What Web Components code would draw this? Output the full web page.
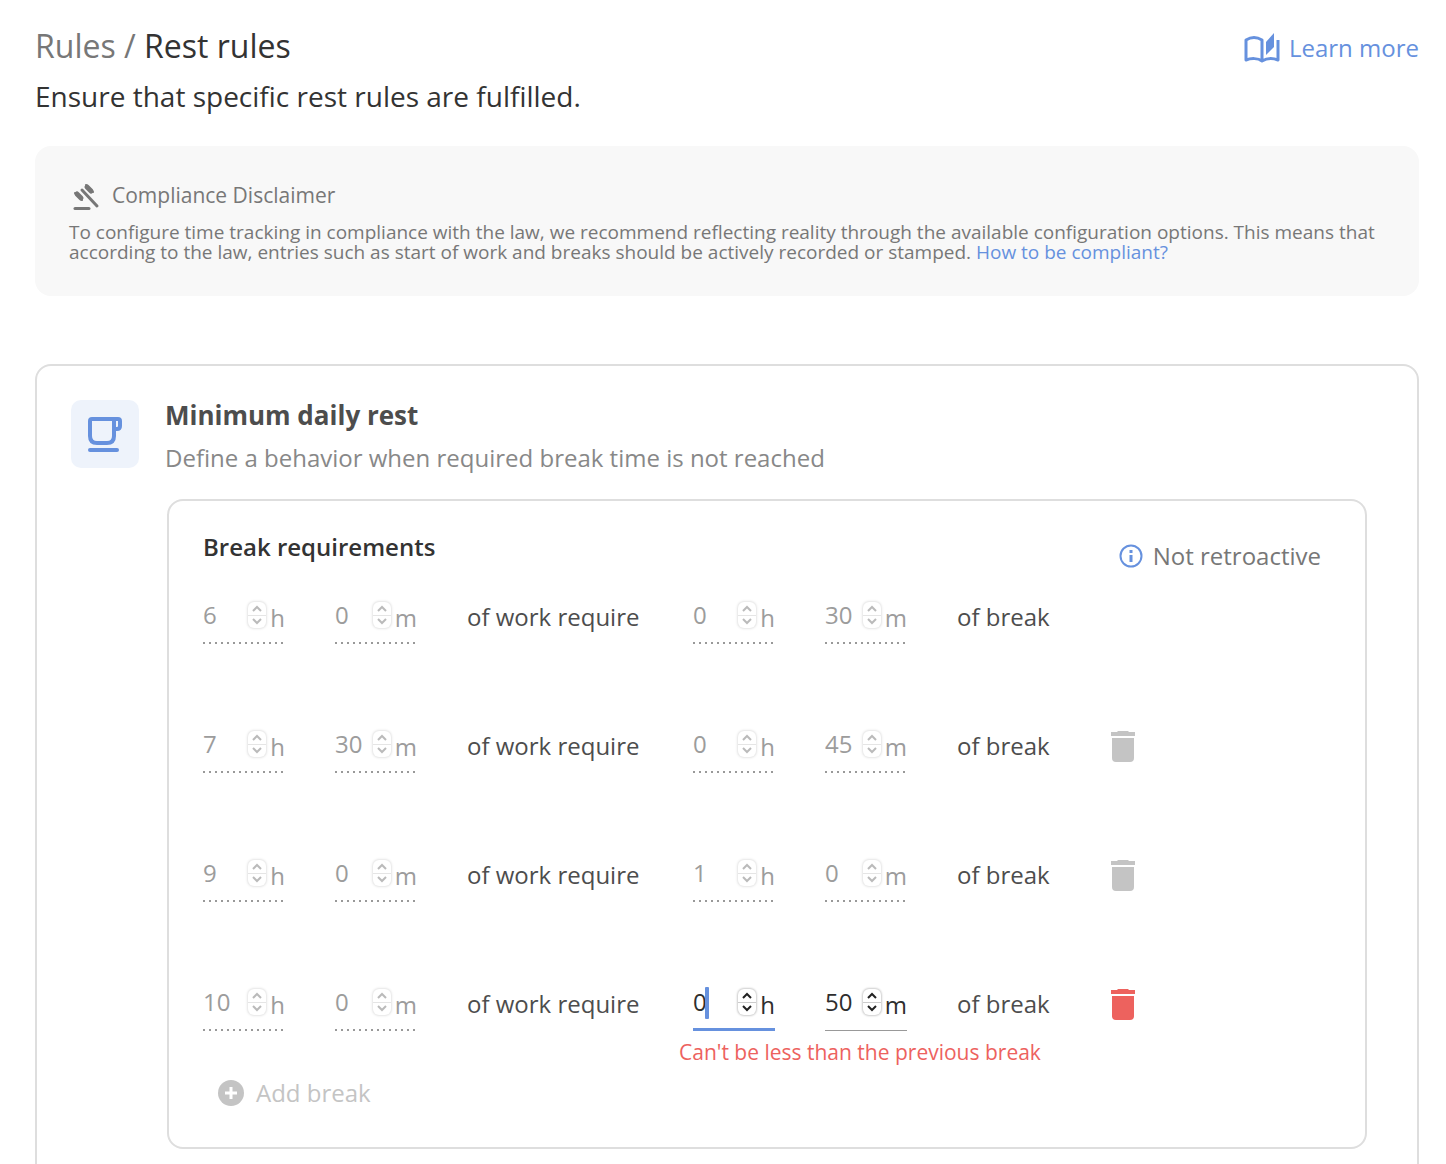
<!DOCTYPE html>
<html lang="en">
<head>
<meta charset="utf-8">
<title>Rest rules</title>
<style>
	body {
	  margin: 0;
	  background: #fff;
	  color: #333;
	  font: 24px/32px "Open Sans", "Noto Sans", sans-serif;
	  --blue: #6691de;
	  --red: #ed625e;
	  --grey: #777;
	  --muted: #9c9c9c;
	  --line: #dedede;
	}
</style>
</head>
<body>
<rest-rules-page>
	<page-header slot="header">
		<a slot="parent" href="#rules">Rules</a>
		<span slot="title">Rest rules</span>
		<span slot="subtitle">Ensure that specific rest rules are fulfilled.</span>
		<span slot="help">Learn more</span>
	</page-header>
	<compliance-note>
		<span slot="title">Compliance Disclaimer</span>
		To configure time tracking in compliance with the law, we recommend reflecting reality through the available configuration options. This means that according to the law, entries such as start of work and breaks should be actively recorded or stamped.
		<a slot="link" href="#compliance">How to be compliant?</a>
	</compliance-note>
	<setting-card>
		<span slot="title">Minimum daily rest</span>
		<span slot="description">Define a behavior when required break time is not reached</span>
		<break-requirements>
			<span slot="title">Break requirements</span>
			<span slot="note">Not retroactive</span>
			<break-row work="6:0" rest="0:30" fixed></break-row>
			<break-row work="7:30" rest="0:45"></break-row>
			<break-row work="9:0" rest="1:0"></break-row>
			<break-row work="10:0" rest="0:50" editing>Can't be less than the previous break</break-row>
		</break-requirements>
	</setting-card>
</rest-rules-page>

<script>
// attaches an open shadow root filled with the given markup
function render(host, html) {
  const template = document.createElement("template");
  template.innerHTML = html;
  host.attachShadow({ mode: "open" }).appendChild(template.content.cloneNode(true));
}

class RestRulesPage extends HTMLElement {
  constructor() {
    super();
    render(this, `
	<style>
		:host {
		  display: block;
		  padding: 28px 27px 0 35px;
		}
		main {
		  display: flex;
		  flex-direction: column;
		  gap: 68px;
		  margin-top: 32px;
		}
	</style>
	<slot name="header"></slot>
	<main><slot></slot></main>
    `);
  }
}

class PageHeader extends HTMLElement {
  constructor() {
    super();
    render(this, `
	<style>
		:host {
		  display: block;
		}
		.top {
		  display: flex;
		  justify-content: space-between;
		  align-items: center;
		}
		h1 {
		  margin: 0;
		  font-size: 32px;
		  line-height: 36px;
		  font-weight: 400;
		}
		.parent {
		  color: var(--grey);
		}
		::slotted(a) {
		  color: inherit;
		  text-decoration: none;
		}
		.help {
		  display: flex;
		  align-items: center;
		  gap: 8px;
		  padding-top: 4px;
		  color: var(--blue);
		  text-decoration: none;
		}
		p {
		  margin: 14px 0 0;
		  font-size: 28px;
		  line-height: 36px;
		}
	</style>
	<div class="top">
		<h1><span class="parent"><slot name="parent"></slot> /</span> <slot name="title"></slot></h1>
		<a class="help" href="#help">
			<svg width="38" height="32" viewBox="0 0 38 32" fill="none" stroke="currentColor" stroke-width="3" aria-hidden="true">
				<path d="M19 29C15 26 8 26 3 28V8C8 5 14 5 19 8V29C24 26 30 26 35 28V8" stroke-linejoin="round"/>
				<path d="M23 10L31 1V15L23 23Z" fill="currentColor" stroke="none"/>
			</svg>
			<slot name="help"></slot>
		</a>
	</div>
	<p><slot name="subtitle"></slot></p>
    `);
  }
}

class ComplianceNote extends HTMLElement {
  constructor() {
    super();
    render(this, `
	<style>
		:host {
		  display: block;
		  padding: 34px;
		  border-radius: 16px;
		  background: #f8f8f8;
		  color: var(--grey);
		}
		h2 {
		  display: flex;
		  align-items: center;
		  gap: 9px;
		  margin: 0 0 12px;
		  font-size: 21px;
		  line-height: 30px;
		  font-weight: 400;
		}
		p {
		  margin: 0;
		  font-size: 19px;
		  line-height: 20px;
		  font-weight: 500;
		}
		::slotted(a) {
		  display: inline-block;
		  color: var(--blue);
		  text-decoration: none;
		}
	</style>
	<h2>
		<svg width="34" height="30" viewBox="0 0 34 30" stroke="currentColor" stroke-linecap="round" fill="none" aria-hidden="true">
			<path d="M6 28.500H20" stroke-width="3"/>
			<path d="M13 10L28 26" stroke-width="3"/>
			<path d="M8 14L12 18M18 7L22 11" stroke-width="5"/>
			<path d="M6 13L13 20M17 5L24 12" stroke-width="2"/>
		</svg>
		<slot name="title"></slot>
	</h2>
	<p><slot></slot> <slot name="link"></slot></p>
    `);
  }
}

class SettingCard extends HTMLElement {
  constructor() {
    super();
    render(this, `
	<style>
		:host {
		  display: block;
		  padding: 34px 50px 50px 34px;
		  border: 2px solid var(--line);
		  border-radius: 16px;
		  font-weight: 500;
		}
		header {
		  display: flex;
		  gap: 26px;
		}
		.tile {
		  display: grid;
		  place-items: center;
		  width: 68px;
		  height: 68px;
		  border-radius: 10px;
		  background: #eef3fb;
		  color: var(--blue);
		}
		h2 {
		  margin: 0;
		  font-size: 26px;
		  line-height: 30px;
		  font-weight: 700;
		  color: #4d4d4d;
		}
		p {
		  margin: 12px 0 0;
		  color: #888;
		}
		.body {
		  margin: 25px 0 0 96px;
		}
	</style>
	<header>
		<div class="tile">
			<svg width="38" height="38" viewBox="0 0 38 38" fill="none" stroke="currentColor" stroke-width="4" stroke-linejoin="round" stroke-linecap="round" aria-hidden="true">
				<path d="M6 4H32Q34 4 34 6V11Q34 14 31 14H28M28 4V21Q28 28 21 28H11Q4 28 4 21V6Q4 4 6 4"/>
				<path d="M4 35H31"/>
			</svg>
		</div>
		<div>
			<h2><slot name="title"></slot></h2>
			<p><slot name="description"></slot></p>
		</div>
	</header>
	<div class="body"><slot></slot></div>
    `);
  }
}

class BreakRequirements extends HTMLElement {
  constructor() {
    super();
    render(this, `
	<style>
		:host {
		  display: block;
		  padding: 30px 34px 38px;
		  border: 2px solid var(--line);
		  border-radius: 16px;
		}
		header {
		  display: flex;
		  justify-content: space-between;
		  height: 41px;
		  margin: 0 10px 21px 0;
		}
		h3 {
		  margin: 0;
		  font-size: 24px;
		  font-weight: 600;
		}
		.note {
		  display: flex;
		  align-items: center;
		  align-self: flex-end;
		  gap: 10px;
		  color: var(--grey);
		}
		.note svg {
		  color: var(--blue);
		}
		.rows {
		  display: grid;
		  gap: 78px;
		}
		.add {
		  display: flex;
		  align-items: center;
		  gap: 12px;
		  margin: 12px 0 0 15px;
		  padding: 0;
		  border: 0;
		  background: none;
		  font: inherit;
		  color: #c4c4c4;
		}
	</style>
	<header>
		<h3><slot name="title"></slot></h3>
		<div class="note">
			<svg width="24" height="24" viewBox="0 0 24 24" fill="none" stroke="currentColor" stroke-width="2" aria-hidden="true">
				<circle cx="12" cy="12" r="10.500"/>
				<path d="M12 11V18M12 6V9" stroke-width="3"/>
			</svg>
			<slot name="note"></slot>
		</div>
	</header>
	<div class="rows"><slot></slot></div>
	<button class="add" type="button" disabled>
		<svg width="26" height="26" viewBox="0 0 26 26" aria-hidden="true">
			<circle cx="13" cy="13" r="13" fill="currentColor"/>
			<path d="M13 7V19M7 13H19" stroke="#fff" stroke-width="3"/>
		</svg>
		Add break
	</button>
    `);
  }
}

// attributes: work="h:m", rest="h:m", fixed (no delete button), editing
class BreakRow extends HTMLElement {
  constructor() {
    super();
    const [workH, workM] = this.getAttribute("work").split(":");
    const [restH, restM] = this.getAttribute("rest").split(":");
    const editing = this.hasAttribute("editing");
    render(this, `
	<style>
		:host {
		  display: block;
		  color: #4d4d4d;
		}
		.row {
		  display: grid;
		  grid-template-columns: 82px 82px 176px 82px 82px 94px 44px;
		  column-gap: 50px;
		  height: 51px;
		}
		.text {
		  padding-top: 8px;
		  white-space: nowrap;
		}
		button {
		  display: grid;
		  place-items: center;
		  height: 44px;
		  margin-top: 2px;
		  padding: 0;
		  border: 0;
		  background: none;
		  color: var(--red);
		}
		button:disabled {
		  color: #c4c4c4;
		}
		.error {
		  display: block;
		  margin: 8px 0 0 476px;
		  font-size: 21px;
		  line-height: 26px;
		  color: var(--red);
		}
	</style>
	<div class="row">
		<time-field value="${workH}" unit="h" disabled></time-field>
		<time-field value="${workM}" unit="m" disabled></time-field>
		<span class="text">of work require</span>
		<time-field value="${restH}" unit="h" ${editing ? "active" : "disabled"}></time-field>
		<time-field value="${restM}" unit="m" ${editing ? "" : "disabled"}></time-field>
		<span class="text">of break</span>
		${this.hasAttribute("fixed") ? "" : `
		<button type="button" aria-label="Delete" ${editing ? "" : "disabled"}>
			<svg width="26" height="32" viewBox="0 0 26 32" fill="currentColor" aria-hidden="true">
				<path d="M1 2H7L8 1H18L19 2H25V6H1ZM2 8H24V28Q24 32 20 32H6Q2 32 2 28Z"/>
			</svg>
		</button>`}
	</div>
	${editing ? `<span class="error" role="alert"><slot></slot></span>` : ""}
    `);
  }
}

class TimeField extends HTMLElement {
  constructor() {
    super();
    const disabled = this.hasAttribute("disabled") ? "disabled" : "";
    render(this, `
	<style>
		:host {
		  display: flex;
		  position: relative;
		  height: 51px;
		  box-sizing: border-box;
		  border-bottom: 1px solid #999;
		  color: #2e2e2e;
		  font-weight: 400;
		}
		:host([disabled]) {
		  color: var(--muted);
		  border: 0;
		  background: repeating-linear-gradient(90deg, #999 0 2px, transparent 2px 6px) left bottom / 100% 2px no-repeat;
		}
		:host([active]) {
		  border-bottom: 3px solid var(--blue);
		}
		input {
		  flex: 1;
		  min-width: 0;
		  width: 0;
		  height: 32px;
		  margin: 6px 0 0;
		  padding: 0;
		  border: 0;
		  outline: 0;
		  background: none;
		  font: inherit;
		  color: inherit;
		  appearance: textfield;
		}
		input::-webkit-inner-spin-button {
		  display: none;
		}
		.stepper {
		  display: grid;
		  width: 18px;
		  height: 26px;
		  margin: 9px 4px 0 0;
		  border-radius: 6px;
		  background: linear-gradient(#ccc, #ccc) center / 100% 1px no-repeat #fff;
		  box-shadow: 0 0 2px 1px rgba(0, 0, 0, .2);
		}
		:host([disabled]) .stepper {
		  opacity: .5;
		}
		.stepper button {
		  display: grid;
		  place-items: center;
		  height: 13px;
		  padding: 0;
		  border: 0;
		  background: none;
		  color: #222;
		}
		:host([disabled]) .stepper button {
		  color: #777;
		}
		label {
		  padding-top: 9px;
		}
		.caret {
		  position: absolute;
		  left: 12px;
		  top: 7px;
		  width: 4px;
		  height: 32px;
		  border-radius: 1px;
		  background: var(--blue);
		}
	</style>
	<input id="value" type="number" min="0" value="${this.getAttribute("value")}" ${disabled}>
	<div class="stepper">
		<button type="button" class="up" aria-label="Increase" tabindex="-1" ${disabled}>
			<svg width="12" height="7" viewBox="0 0 12 7" fill="none" stroke="currentColor" stroke-width="2"><path d="M2 6L6 2L10 6"/></svg>
		</button>
		<button type="button" class="down" aria-label="Decrease" tabindex="-1" ${disabled}>
			<svg width="12" height="7" viewBox="0 0 12 7" fill="none" stroke="currentColor" stroke-width="2"><path d="M2 1L6 5L10 1"/></svg>
		</button>
	</div>
	<label for="value">${this.getAttribute("unit")}</label>
	${this.hasAttribute("active") ? `<span class="caret"></span>` : ""}
    `);
    const input = this.shadowRoot.querySelector("input");
    this.shadowRoot.querySelector(".up").onclick = () => input.stepUp();
    this.shadowRoot.querySelector(".down").onclick = () => input.stepDown();
  }
}

window.customElements.define("rest-rules-page", RestRulesPage);
window.customElements.define("page-header", PageHeader);
window.customElements.define("compliance-note", ComplianceNote);
window.customElements.define("setting-card", SettingCard);
window.customElements.define("break-requirements", BreakRequirements);
window.customElements.define("time-field", TimeField);
window.customElements.define("break-row", BreakRow);
</script>
</body>
</html>
